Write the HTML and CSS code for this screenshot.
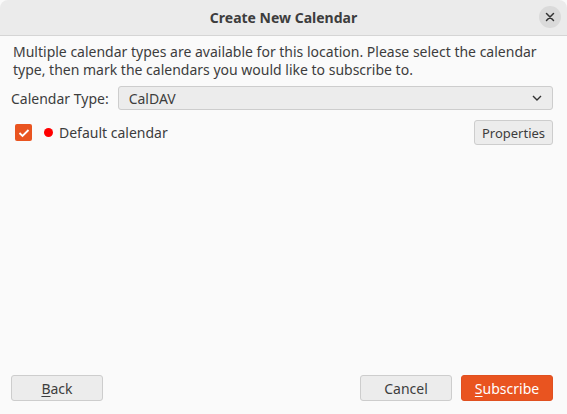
FILE: index.html
```html
<!DOCTYPE html>
<html>
<head>
<meta charset="utf-8">
<link rel="stylesheet" href="styles.css">
</head>
<body>
<div class="window">
  <div class="titlebar">
    <span class="title">Create New Calendar</span>
    <button class="close" aria-label="Close">
      <svg width="10" height="10" viewBox="0 0 10 10"><path d="M1.5 1.5 L8.5 8.5 M8.5 1.5 L1.5 8.5" stroke="#333" stroke-width="1.5" stroke-linecap="round"/></svg>
    </button>
  </div>
  <div class="content">
    <p class="intro">Multiple calendar types are available for this location. Please select the calendar type, then mark the calendars you would like to subscribe to.</p>
    <div class="type-row">
      <span class="label">Calendar Type:</span>
      <div class="select">
        <span>CalDAV</span>
        <svg width="10" height="6" viewBox="0 0 10 6"><path d="M1 1 L5 5 L9 1" stroke="#333" stroke-width="1.4" fill="none"/></svg>
      </div>
    </div>
    <div class="cal-row">
      <span class="checkbox">
        <svg width="12" height="10" viewBox="0 0 12 10"><path d="M1.5 5 L4.5 8 L10.5 2" stroke="#fff" stroke-width="1.8" fill="none"/></svg>
      </span>
      <span class="dot"></span>
      <span class="cal-name">Default calendar</span>
      <button class="btn small">Properties</button>
    </div>
    <div class="spacer"></div>
    <div class="footer">
      <button class="btn wide"><u>B</u>ack</button>
      <div class="right">
        <button class="btn wide">Cancel</button>
        <button class="btn wide primary"><u>S</u>ubscribe</button>
      </div>
    </div>
  </div>
</div>
</body>
</html>
```

FILE: styles.css
```css
* { box-sizing: border-box; }
html, body { margin: 0; padding: 0; }
body {
  width: 567px;
  height: 414px;
  background: #fafafa;
  font-family: "Noto Sans", "DejaVu Sans", sans-serif;
  color: #3d3d3d;
  overflow: hidden;
}
.window {
  width: 567px;
  height: 414px;
  display: flex;
  flex-direction: column;
  background: #fafafa;
}
.titlebar {
  height: 36px;
  flex: none;
  background: #ebebeb;
  border-bottom: 1px solid #d5d5d5;
  border-radius: 8px 8px 0 0;
  position: relative;
  display: flex;
  align-items: center;
  justify-content: center;
}
.title {
  font-size: 14px;
  font-weight: bold;
  color: #3d3d3d;
}
.close {
  position: absolute;
  right: 6px;
  top: 6px;
  width: 22px;
  height: 22px;
  border-radius: 50%;
  border: none;
  background: #dadada;
  padding: 0;
  display: flex;
  align-items: center;
  justify-content: center;
}
.content {
  flex: 1;
  display: flex;
  flex-direction: column;
  padding: 0 14px 13px 11px;
}
.intro {
  margin: 7px 0 0 2px;
  font-size: 14px;
  line-height: 18px;
  color: #3d3d3d;
}
.type-row {
  display: flex;
  align-items: center;
  margin-top: 7px;
  gap: 9px;
}
.label { font-size: 14px; }
.select {
  flex: 1;
  height: 24px;
  background: #ececec;
  border: 1px solid #cdcdcd;
  border-radius: 3px;
  display: flex;
  align-items: center;
  justify-content: space-between;
  padding: 0 10px 0 10px;
  font-size: 14px;
}
.cal-row {
  display: flex;
  align-items: center;
  margin-top: 10px;
  padding-left: 4px;
}
.checkbox {
  width: 17px;
  height: 17px;
  background: #e95420;
  border-radius: 2px;
  display: flex;
  align-items: center;
  justify-content: center;
}
.dot {
  width: 9px;
  height: 9px;
  border-radius: 50%;
  background: #f00;
  margin-left: 12px;
}
.cal-name {
  font-size: 14px;
  margin-left: 6px;
  flex: 1;
}
.btn {
  font-family: inherit;
  font-size: 14px;
  color: #3d3d3d;
  background: #ececec;
  border: 1px solid #cdcdcd;
  border-radius: 3px;
  height: 26px;
  padding: 0;
}
.btn u { text-decoration: underline; text-underline-offset: 2px; }
.btn.small {
  font-size: 13px;
  width: 79px;
  height: 25px;
}
.spacer { flex: 1; }
.footer {
  display: flex;
  justify-content: space-between;
  align-items: center;
}
.right { display: flex; gap: 9px; }
.btn.wide { width: 92px; }
.btn.primary {
  background: #e95420;
  border-color: #e05020;
  color: #fff;
}
```
